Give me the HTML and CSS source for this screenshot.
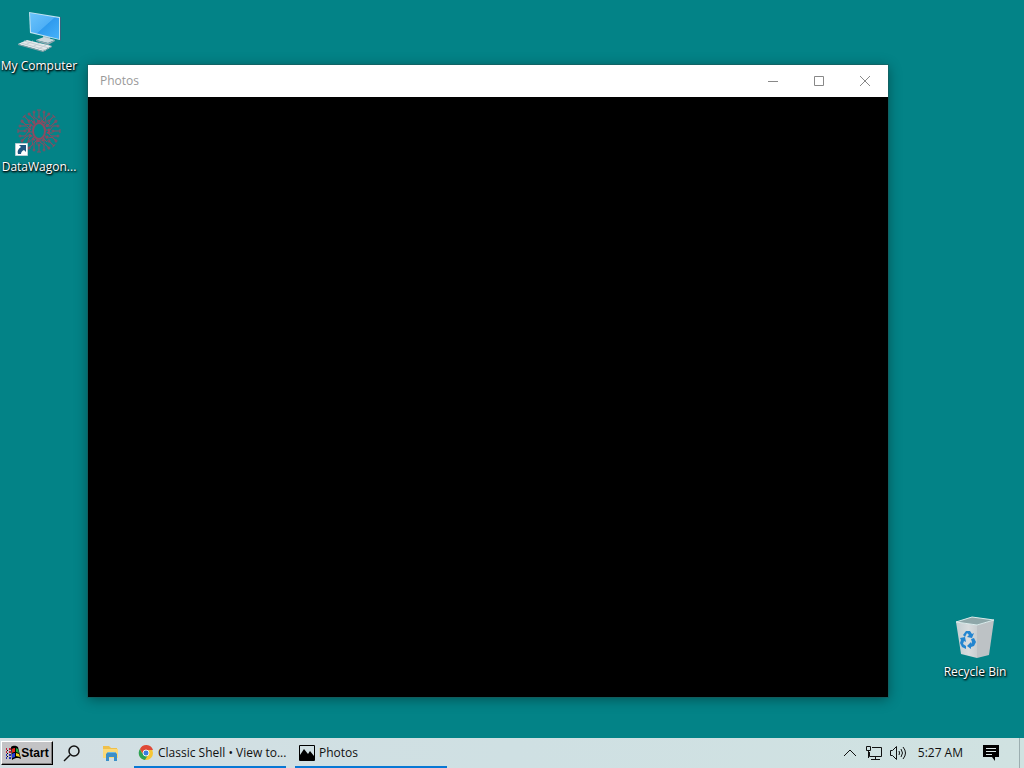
FILE: index.html
```html
<!DOCTYPE html>
<html lang="en">
<head>
  <meta charset="UTF-8" />
  <meta name="viewport" content="width=device-width, initial-scale=1" />
  <title>Desktop</title>
  <link rel="stylesheet" href="styles.css">
</head>
<body>
  <main class="desktop">
    <nav class="shortcuts" aria-label="Desktop">
      <a class="shortcut" href="#computer">
        <svg class="shortcut-icon" viewBox="0 0 48 48" aria-hidden="true">
          <defs>
            <linearGradient id="screen" x1="0" y1="0" x2="1" y2="1">
              <stop offset="0" stop-color="#6cc4fb" />
              <stop offset="0.5" stop-color="#4fb0f6" />
              <stop offset="0.52" stop-color="#2f9bee" />
              <stop offset="1" stop-color="#46b2fa" />
            </linearGradient>
          </defs>
          <path d="M28 27l7 2v4l-7-1z" fill="#9fb4bd" />
          <path d="M21 32l8-3 11 3-7 3z" fill="#cbd9de" />
          <path d="M21 32l12 3 7-3v1l-7 4-12-4z" fill="#8fa6af" />
          <path d="M14 4l31 5v23L15 25z" fill="#c3e4f2" />
          <path d="M45 9h1v24l-1-1z" fill="#33647d" />
          <path d="M15 5l29 5v21L16 24z" fill="url(#screen)" />
          <path d="M3 36l9-4 25 6-9 5z" fill="#e5eaec" />
          <path d="M3 36l25 7 9-5v1l-9 5L3 37z" fill="#89a0a8" />
          <path d="M6 35l25 7M9 33l25 7M18 33l-8 4M25 35l-8 4M31 37l-8 4" stroke="#c3ced2" fill="none" />
        </svg>
        <span class="shortcut-label">My Computer</span>
      </a>
      <a class="shortcut" href="#datawagon">
        <svg class="shortcut-icon" viewBox="0 0 48 48" aria-hidden="true">
          <defs>
            <g id="trace">
              <path d="M23 15v-4l-4-3V3M25 14l4-4V3M20 15l-4-4M24 8V1M22 1h4" />
              <circle cx="19" cy="3" r="1" />
              <circle cx="29" cy="3" r="1" />
              <circle cx="24" cy="8" r="1" />
            </g>
          </defs>
          <g fill="none" stroke="#8c4a60" stroke-width="1">
            <ellipse cx="24" cy="22" rx="6" ry="8" stroke-width="2" />
            <circle cx="24" cy="22" r="10" stroke-width="2" stroke-dasharray="3 2" />
            <use href="#trace" />
            <use href="#trace" transform="rotate(45 24 22)" />
            <use href="#trace" transform="rotate(90 24 22)" />
            <use href="#trace" transform="rotate(135 24 22)" />
            <use href="#trace" transform="rotate(180 24 22)" />
            <use href="#trace" transform="rotate(225 24 22)" />
            <use href="#trace" transform="rotate(270 24 22)" />
            <use href="#trace" transform="rotate(315 24 22)" />
          </g>
          <path d="M.500 34.500h12v12H.500z" fill="#fff" stroke="#b9cdd3" />
          <path d="M4 36h7v7l-2-2c-2 1-3 2-3 4H3c-1-3 0-5 3-7z" fill="#20567f" />
        </svg>
        <span class="shortcut-label">DataWagon...</span>
      </a>
    </nav>

    <a class="shortcut recycle" href="#recycle">
      <svg class="shortcut-icon" viewBox="0 0 48 48" aria-hidden="true">
        <defs>
          <linearGradient id="bin" x1="0" y1="0" x2="1" y2="0">
            <stop offset="0" stop-color="#c3ced2" />
            <stop offset="0.6" stop-color="#d8dcde" />
            <stop offset="1" stop-color="#c9ced0" />
          </linearGradient>
        </defs>
        <path d="M5 8l16-5 22 3-17 5z" fill="#8fa7a9" />
        <path d="M5 8l21 3v33L10 40z" fill="url(#bin)" />
        <path d="M26 11l17-5-5 35-12 3z" fill="#bdc2c5" />
        <path d="M5 8l16-5 22 3-17 5z" fill="none" stroke="#dcebeb" />
        <g fill="#2385d0">
          <path d="M12 21l3-4h4l2 3 2-1-2 5-5-1 2-2-2-2-2 4z" />
          <path d="M9 24l5-1 1 5-2-1-1 3 3 2v3l-4-2-2-4 1-3z" />
          <path d="M20 25l3-1 2 4-2 4-3 1v2l-4-3 4-4v2l1-2z" />
        </g>
      </svg>
      <span class="shortcut-label">Recycle Bin</span>
    </a>

    <section class="window" aria-label="Photos">
      <header class="titlebar">
        <h1 class="title">Photos</h1>
        <button class="window-btn" aria-label="Minimize">
          <svg viewBox="0 0 12 12" aria-hidden="true"><path d="M1 6.500h10" /></svg>
        </button>
        <button class="window-btn" aria-label="Maximize">
          <svg viewBox="0 0 12 12" aria-hidden="true"><path d="M1.500 1.500h9v9h-9z" /></svg>
        </button>
        <button class="window-btn" aria-label="Close">
          <svg viewBox="0 0 12 12" aria-hidden="true"><path d="M1 1l10 10M11 1L1 11" /></svg>
        </button>
      </header>
      <div class="viewer"></div>
    </section>
  </main>

  <footer class="taskbar">
    <button class="start">
      <svg class="start-flag" viewBox="0 0 16 16" aria-hidden="true">
        <path d="M6 2c3-2 5-1 7 0l3 12c-2-1-5-2-9 1z" fill="#000" />
        <path d="M7 4c1-1 2-1 3-1v4c-1 0-2 0-3 1z" fill="#e02a20" />
        <path d="M11 3l2 1 1 4-3-1z" fill="#1faa3c" />
        <path d="M7 9c1-1 2-1 3-1v4l-3 1z" fill="#2440d8" />
        <path d="M11 8l3 1 1 3-4-1z" fill="#f0d020" />
        <path d="M1 4h1M4 4h2M1 7h1M4 7h2" stroke="#c02038" stroke-width="2" />
        <path d="M1 10h1M4 10h2M1 13h1M4 13h2" stroke="#2430b0" stroke-width="2" />
        <path d="M2 5.500h1M2 8.500h1M2 11.500h1" stroke="#000" />
      </svg>
      <span>Start</span>
    </button>
    <button class="launcher" aria-label="Search">
      <svg viewBox="0 0 18 18" aria-hidden="true">
        <circle cx="11" cy="7" r="5" fill="none" stroke="#111" stroke-width="1.500" />
        <path d="M7 11l-6 6" stroke="#111" stroke-width="1.500" />
      </svg>
    </button>
    <button class="launcher" aria-label="File Explorer">
      <svg viewBox="0 0 18 18" aria-hidden="true">
        <path d="M2 2h6l2 2h6v4H2z" fill="#f0c04a" />
        <path d="M2 5h15v9H2z" fill="#fbd978" />
        <path d="M5 10l2-2h7l2 2v7h-3v-4H8v4H5z" fill="#3c8fc8" />
        <path d="M7 8h7v1H7z" fill="#65b7e7" />
      </svg>
    </button>
    <div class="tasks">
      <button class="task">
        <svg viewBox="0 0 16 16" aria-hidden="true">
          <circle cx="8" cy="8" r="7" fill="#f6c634" />
          <path d="M8 8H4L2 4a7 7 0 0 0 5 11l3-5z" fill="#2da255" />
          <path d="M2 4a7 7 0 0 1 13 1H8L5 9z" fill="#df4936" />
          <circle cx="8" cy="8" r="3" fill="#397de0" stroke="#f4f6f6" />
        </svg>
        <span>Classic Shell • View to...</span>
      </button>
      <button class="task">
        <svg viewBox="0 0 16 16" aria-hidden="true">
          <path d="M.500.500h15v15H.500z" fill="none" stroke="#000" />
          <path d="M1 10l4-6 4 5 2-3 4 5v4H1z" fill="#000" />
        </svg>
        <span>Photos</span>
      </button>
    </div>
    <div class="tray">
      <button class="tray-btn" aria-label="Show hidden icons">
        <svg viewBox="0 0 18 18" aria-hidden="true"><path d="M3 12l6-6 6 6" /></svg>
      </button>
      <button class="tray-btn" aria-label="Network">
        <svg viewBox="0 0 18 18" aria-hidden="true">
          <path d="M7 3.500h9.500v9H4.500V8M10.500 13v3M6 15.500h9M1.500 2.500h4v4h-4zM3.500 7v7" />
        </svg>
      </button>
      <button class="tray-btn" aria-label="Volume">
        <svg viewBox="0 0 18 18" aria-hidden="true">
          <path d="M1.500 6.500h2l4-4v13l-4-4h-2zM10 7q1 2 0 4M12 5q3 4 0 8M14 3q5 6 0 12" />
        </svg>
      </button>
      <time class="clock" datetime="05:27">5:27 AM</time>
      <button class="tray-btn action" aria-label="Notifications">
        <svg viewBox="0 0 18 18" aria-hidden="true">
          <path d="M1 1h16v12h-4v4l-3-4H1z" fill="#000" stroke="none" />
          <path d="M4 4.500h10M4 7.500h10M4 10.500h6" stroke="#dce8e8" />
        </svg>
      </button>
      <button class="show-desktop" aria-label="Show desktop"></button>
    </div>
  </footer>
</body>
</html>
```

FILE: styles.css
```css
* {
  box-sizing: border-box;
}

body {
  margin: 0;
  min-height: 100vh;
  display: flex;
  flex-direction: column;
  background: #038387;
  color: #111;
  font-family: "Open Sans", "Noto Sans", sans-serif;
  font-size: 12px;
  line-height: 16px;
}

button {
  border: 0;
  padding: 0;
  background: none;
  color: inherit;
  font: inherit;
}

svg {
  display: block;
  flex: none;
}

/* Desktop */
.desktop {
  position: relative;
  flex: 1;
  overflow: hidden;
}

.shortcuts {
  display: flex;
  flex-direction: column;
  align-items: flex-start;
  gap: 35px;
  padding-top: 8px;
}

.shortcut {
  display: flex;
  flex-direction: column;
  align-items: center;
  gap: 2px;
  width: 78px;
  color: #fff;
  text-decoration: none;
}

.shortcut-icon {
  width: 48px;
  height: 48px;
}

.shortcut-label {
  white-space: nowrap;
  text-shadow: 1px 1px 2px #000, 0 1px 2px #000;
}

.recycle {
  position: absolute;
  right: 10px;
  bottom: 58px;
}

/* Photos window */
.window {
  position: absolute;
  top: 65px;
  right: 136px;
  bottom: 41px;
  left: 88px;
  display: flex;
  flex-direction: column;
  background: #000;
  box-shadow: 0 0 0 1px rgba(40, 80, 80, 0.4), 0 2px 12px rgba(0, 0, 0, 0.4);
}

.titlebar {
  display: flex;
  align-items: stretch;
  height: 32px;
  padding-left: 12px;
  background: #fff;
  color: #999;
}

.title {
  flex: 1;
  margin: 0;
  font-size: 12px;
  font-weight: 400;
  line-height: 32px;
}

.window-btn {
  display: flex;
  align-items: center;
  justify-content: center;
  width: 46px;
}

.window-btn svg {
  width: 12px;
  height: 12px;
  fill: none;
  stroke: #888;
}

.viewer {
  flex: 1;
}

/* Taskbar */
.taskbar {
  display: flex;
  align-items: center;
  height: 30px;
  background: linear-gradient(90deg, #d3dfe3, #cfe0e3 50%, #d0e2e1);
}

.start {
  display: flex;
  align-items: center;
  justify-content: center;
  width: 52px;
  height: 24px;
  margin-left: 1px;
  background: #c3c3c5;
  border: 1px solid;
  border-color: #fff #000 #000 #fff;
  box-shadow: inset -1px -1px #808080;
  color: #000;
  font-family: "Liberation Sans", Arial, sans-serif;
  font-weight: 700;
}

.start-flag {
  width: 16px;
  height: 16px;
}

.launcher {
  display: flex;
  align-items: center;
  justify-content: center;
  width: 38px;
  height: 30px;
}

.launcher svg {
  width: 18px;
  height: 18px;
}

.tasks {
  display: flex;
  flex: 1;
  gap: 9px;
  min-width: 0;
  padding-left: 5px;
}

.task {
  display: flex;
  align-items: center;
  gap: 4px;
  width: 152px;
  height: 30px;
  padding: 2px 4px 0;
  border-bottom: 2px solid #0878d4;
  white-space: nowrap;
}

.task svg {
  width: 16px;
  height: 16px;
}

/* Notification area */
.tray {
  display: flex;
  align-items: center;
}

.tray-btn {
  display: flex;
  align-items: center;
  justify-content: center;
  width: 24px;
  height: 30px;
}

.tray-btn svg {
  width: 18px;
  height: 18px;
  fill: none;
  stroke: #111;
}

.clock {
  padding: 0 8px;
  white-space: nowrap;
}

.action {
  width: 40px;
}

.show-desktop {
  width: 5px;
  height: 30px;
  margin-left: 8px;
  border-left: 1px solid #9caeb0;
}
```
